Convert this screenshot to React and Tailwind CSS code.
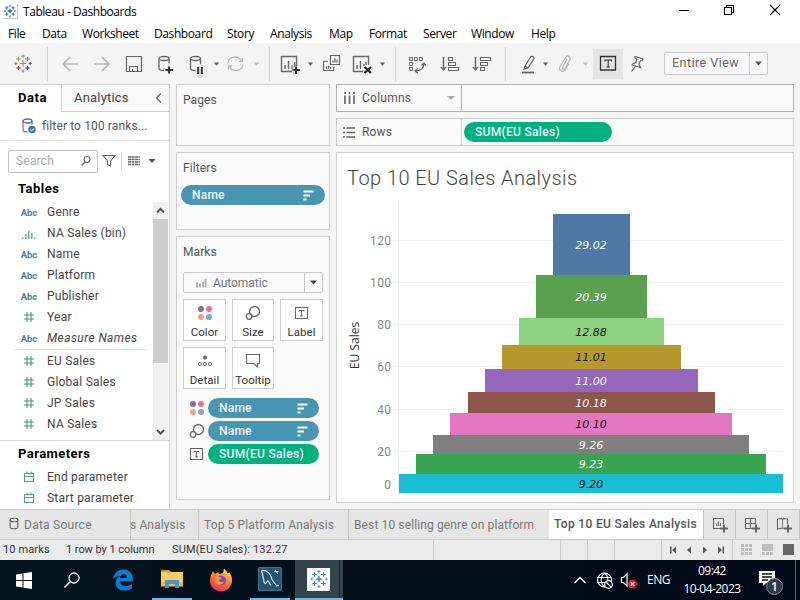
import React from "react";

const UI = "font-['Open_Sans','Noto_Sans',sans-serif]";

function Svg({ w, h = 20, className = "", children, stroke = "#666" }) {
  return (
    <svg width={w} height={h} viewBox={`0 0 ${w} ${h}`} fill="none" stroke={stroke} strokeWidth="1.3" className={`block shrink-0 ${className}`}>
      {children}
    </svg>
  );
}

/* Tableau mark built out of plus signs: [x, y, arm, colour] */
function Crosses({ items, sw = 1.2 }) {
  return items.map(([x, y, r, c], i) => (
    <path key={i} d={`M${x - r} ${y}h${2 * r}M${x} ${y - r}v${2 * r}`} stroke={c} strokeWidth={sw} />
  ));
}
const MARK = [
  [10, 9.5, 3.2, "#e8762d"], [5.5, 5, 2.3, "#c88a3e"], [14.5, 5, 2.3, "#59879b"],
  [5.5, 14, 2.3, "#b5263c"], [14.5, 14, 2.3, "#1f447e"], [10, 2, 1.6, "#7199a6"],
  [10, 17, 1.6, "#7b82a8"], [2.8, 9.5, 1.5, "#8b83a8"], [17.3, 9.5, 1.5, "#5b6591"],
];
const BLUE_MARK = MARK.map(([x, y, r], i) => [x, y, r, i === 0 ? "#2f6d8e" : i > 4 ? "#6ba0bd" : "#4b87a8"]);

const Caret = ({ className, color = "#666" }) => (
  <Svg w={7} className={className} stroke="none"><path d="M.8 8.5h5.4l-2.7 3.2z" fill={color} /></Svg>
);
const WideCaret = ({ color }) => <Svg w={9} h={7} stroke="none"><path d="M1 1.500h7L4.500 5.500z" fill={color} /></Svg>;
const Divider = ({ className }) => <div className={`-mt-[7px] h-[34px] w-px shrink-0 bg-[#d0d0d0] ${className}`} />;

function TitleBar() {
  return (
    <div className={`flex h-[23px] items-start bg-white text-black ${UI}`}>
      <div className="ml-[3px] mt-[4px] h-[15px] w-[15px] border-b border-r border-[#c5c5c5]">
        <svg width="14" height="14" viewBox="0 0 20 19" fill="none"><Crosses items={BLUE_MARK} sw={1.9} /></svg>
      </div>
      <span className="ml-[5px] mt-[4px] text-[12px] leading-4 tracking-[-0.450px]">Tableau - Dashboards</span>
      <div className="ml-auto mr-[19px] flex gap-[34px] pt-[4px]">
        <Svg w={12} h={12} stroke="#000" className="-mr-px ml-px"><path d="M1 6.5h10" strokeWidth="1" /></Svg>
        <Svg w={12} h={12} stroke="#000"><path d="M1.5 3.5h7v7h-7zM3.5 3.5v-2h7v7h-2" strokeWidth="1.1" /></Svg>
        <Svg w={12} h={12} stroke="#000"><path d="M1 1l10 10M11 1L1 11" strokeWidth="1.1" /></Svg>
      </div>
    </div>
  );
}

function MenuBar() {
  const items = [
    ["File", "w-[18px]"], ["Data", "w-6"], ["Worksheet", "w-14"], ["Dashboard", "w-[57px]"], ["Story", "w-[27px]"],
    ["Analysis", "w-[43px]"], ["Map", "w-6"], ["Format", "w-[38px]"], ["Server", "w-8"], ["Window", "w-11"], ["Help", "w-6"],
  ];
  return (
    <div className={`flex h-[20px] gap-4 bg-white pl-2 pt-[2px] text-[12px] leading-[18px] tracking-[-0.400px] text-black ${UI}`}>
      {items.map(([t, w]) => <span key={t} className={`shrink-0 whitespace-nowrap ${w}`}>{t}</span>)}
    </div>
  );
}

function ToolBar() {
  return (
    <div className="flex h-[41px] items-start bg-[#f4f4f4] pt-[11px]">
      <Svg w={20} className="ml-[13px]"><Crosses items={MARK} /></Svg>
      <Divider className="ml-[14px]" />
      <Svg w={18} className="ml-[13px]" stroke="#b5b5b5"><path d="M17 10H2M9 3l-7 7 7 7" strokeWidth="1.7" /></Svg>
      <Svg w={18} className="ml-[14px]" stroke="#b5b5b5"><path d="M1 10h15M9 3l7 7-7 7" strokeWidth="1.7" /></Svg>
      <Svg w={18} className="ml-[14px]"><path d="M1.500 2.500h15v15h-15zM4.500 17v-4.500h8V17M7.500 17v-2" strokeWidth="1.200" /></Svg>
      <Svg w={18} className="ml-[14px]">
        <ellipse cx="7" cy="4.500" rx="5" ry="2" /><path d="M2 4.500v10c0 1 2 2 5 2M12 4.500v5" />
        <path d="M12 12.500v7M8.500 16h7.500" stroke="#333" strokeWidth="2" />
      </Svg>
      <Svg w={16} className="ml-[14px]">
        <ellipse cx="6.500" cy="4.500" rx="5" ry="2" /><path d="M1.500 4.500v10c0 1 2 2 5 2M11.500 4.500v6" />
        <path d="M9.200 13v7M12.800 13v7" stroke="#333" strokeWidth="2" />
      </Svg>
      <Caret className="ml-[8px]" />
      <Svg w={19} className="ml-[6px]" stroke="#b9b9b9"><path d="M2 9c.5-4 3.500-6 7-6 3 0 5 1.500 6.500 4M17 10.500c-.5 4-3.500 6-7 6-3 0-5.500-1.500-6.500-4M16.500 4v3.500H13M2.500 15.500V12H6" /></Svg>
      <Caret className="ml-[8px]" color="#b9b9b9" />
      <Divider className="ml-[9px]" />
      <Svg w={21} className="ml-[10px]">
        <path d="M12 17.500H1.500v-15h15V12M5 15v-4M8.500 15V7M12 15v-3.500M14.500 13V8" strokeWidth="1.400" />
        <path d="M16 12.500v7.500M12.500 16H20" stroke="#333" strokeWidth="2" />
      </Svg>
      <Caret className="ml-[6px]" />
      <Svg w={19} className="ml-[8px]">
        <path d="M8.500 1.500h9v9h-9zM6 7.500H1.500v9h10V13M11 8.500v-2M13 8.500v-4M15 8.500v-3M4.500 15v-2.500M6.500 15v-3.500M8.500 15v-2" strokeWidth="1.200" />
      </Svg>
      <Svg w={21} className="ml-[11px]">
        <path d="M11 17.500H1.500v-15h15V11M5 15v-4M8.500 15V7M12 12v-2M14 11V8" strokeWidth="1.400" />
        <path d="M12.500 13l6.500 6M19 13l-6.500 6" stroke="#222" strokeWidth="2.200" />
      </Svg>
      <Caret className="ml-[6px]" />
      <Divider className="ml-[9px]" />
      <Svg w={18} className="ml-[12px]">
        <path d="M1.500 3.500h3v3h-3zM6.500 3.500h3v3h-3zM11.500 3.500h3v3h-3zM1.500 8.500h3v3h-3zM1.500 13.500h3v3h-3z" strokeWidth="1" />
        <path d="M7 17c5 0 9-2 9-8M9.500 14.500L7 17l3 2.200M13.500 11.500L16 9l2 2.500" />
      </Svg>
      <Svg w={20} className="ml-[14px]">
        <path d="M3.500 3v13M1 13l2.500 3L6 13" strokeWidth="1.400" />
        <path d="M8.500 3.500h4v3h-4zM8.500 8.500h7v3h-7zM8.500 13.500h10v3h-10z" strokeWidth="1.100" />
      </Svg>
      <Svg w={20} className="ml-[12px]">
        <path d="M3.500 3v13M1 13l2.500 3L6 13" strokeWidth="1.400" />
        <path d="M8.500 3.500h10v3h-10zM8.500 8.500h7v3h-7zM8.500 13.500h4v3h-4z" strokeWidth="1.100" />
      </Svg>
      <Divider className="ml-[13px]" />
      <Svg w={16} className="ml-[14px]">
        <path d="M5 12l6-9.500c1.500-.5 3 .5 3 2L8 14l-4 1zM5 12l3 2" /><path d="M2 18.500h12" strokeWidth="1.800" />
      </Svg>
      <Caret className="ml-[6px]" />
      <Svg w={14} className="ml-[9px]" stroke="#bdbdbd">
        <path d="M9 5l-4.500 8c-.8 2 1.700 3 2.500 1.500l5-9c1.200-3-2.700-4.500-4-2.500L2 12.500c-2 4 3 6.500 5.500 3L11 9.500" />
      </Svg>
      <Caret className="ml-[10px]" color="#bdbdbd" />
      <div className="-mt-[5px] ml-[4px] flex h-[30px] w-[30px] items-center justify-center bg-[#e4e4e4]">
        <Svg w={18} stroke="#333"><path d="M1.500 2.500h15v13.500h-15z" strokeWidth="1.300" /><path d="M6 7.500V6h6.500v1.500M9.200 6v7M7.500 13H11" strokeWidth="1.100" /></Svg>
      </div>
      <Svg w={14} className="ml-[7px]"><path d="M5 2.500l8 2.300-1 1.700-1.600.2-1.600 3.600 1.800 3.200L2 11l.8-1.300 2.900-.9L6.800 5.300 5 4zM5.500 12.300L1.500 17.500" strokeWidth="1.200" /></Svg>
      <div className="-mt-[2px] ml-[20px] flex h-[23px] w-[104px] items-center rounded-[2px] border border-[#c9c9c9] bg-[#f8f8f8] font-[Roboto,sans-serif]">
        <span className="w-[84px] whitespace-nowrap pl-[7px] text-[12.500px] tracking-[0.470px] text-[#666]">Entire View</span>
        <div className="flex h-full w-[18px] items-center justify-center border-l border-[#c9c9c9]"><WideCaret color="#555" /></div>
      </div>
    </div>
  );
}

const Abc = () => <span className="text-[9.500px] font-bold leading-[21px] tracking-[-0.1px] text-[#4a8094]">Abc</span>;
const Hash = () => <Svg w={12} h={12} stroke="#3d9978" className="-mt-px"><path d="M4 1v10M8 1v10M1 4h10M1 8h10" strokeWidth="1.100" /></Svg>;
const Bins = () => <Svg w={14} h={12} stroke="#5aa58b"><path d="M.7 11v-1.500M3.800 11V6M6.800 11V3M9.800 11V5M12.800 11V9.500" strokeWidth="1.400" /></Svg>;
const Cal = () => <Svg w={12} h={12} stroke="#4fa385" className="-mt-px"><path d="M1.500 2.500h9v8h-9zM1.500 5.500h9M4 .5v3M8 .5v3" strokeWidth="1.100" /></Svg>;

function Field({ icon, name, italic }) {
  return (
    <div className="flex h-[21px] items-center">
      <div className="flex w-[18px] justify-center">{icon}</div>
      <span className={`ml-[9px] whitespace-nowrap text-[12px] leading-[21px] ${italic ? "italic tracking-[0.420px]" : "tracking-[0.220px]"}`}>{name}</span>
    </div>
  );
}

function DataPane() {
  return (
    <div className="flex w-[170px] shrink-0 flex-col border-r border-t border-[#d0d0d0] bg-white text-[#444]">
      <div className="flex h-[27px]">
        <div className="w-[61px] pl-[18px] text-[13px] font-bold leading-[25px] tracking-[0.600px] text-black">Data</div>
        <div className="flex flex-1 items-center border-b border-l border-[#d0d0d0] bg-[#f9f9f9] pl-[12px]">
          <span className="w-[78px] text-[13px] tracking-[0.200px]">Analytics</span>
          <Svg w={10} h={12} className="ml-[2px]"><path d="M7 1.500L2.500 6 7 10.500" strokeWidth="1.300" /></Svg>
        </div>
      </div>
      <div className="flex h-[29px] items-center border-b border-[#dcdcdc] pl-[22px]">
        <Svg w={15} h={16}>
          <ellipse cx="5.500" cy="3" rx="4.500" ry="2" /><path d="M1 3v9c0 1.200 2 2 4.500 2M10 3v4" strokeWidth="1.100" />
          <circle cx="10" cy="11.500" r="3.800" fill="#3b7e9c" stroke="none" /><path d="M8.200 11.500l1.400 1.400 2.400-2.600" stroke="#fff" strokeWidth="1" />
        </Svg>
        <span className="ml-[5px] whitespace-nowrap text-[12px] tracking-[0.120px] text-[#555]">filter to 100 ranks...</span>
      </div>
      <div className="flex h-[40px] items-center pl-2">
        <div className="flex h-[23px] w-[90px] items-center rounded-[2px] border border-[#bfbfbf] pl-[7px]">
          <span className="w-[65px] text-[12px] tracking-[0.200px] text-[#aaa]">Search</span>
          <Svg w={10} h={12}><circle cx="6" cy="4.500" r="3" strokeWidth="1.100" /><path d="M4 6.700L.7 10.500" /></Svg>
        </div>
        <Svg w={14} h={14} className="ml-[4px]"><path d="M1 1.500h12L8.500 7v5l-3-1.500V7z" strokeWidth="1.100" /></Svg>
        <div className="ml-[5px] h-[18px] w-px bg-[#d0d0d0]" />
        <Svg w={13} h={11} className="ml-[6px]"><path d="M0 1h12M0 3.500h12M0 6h12M0 8.500h12" strokeDasharray="3 0.500" strokeWidth="1.400" /></Svg>
        <Svg w={8} h={6} className="ml-[7px]" stroke="none"><path d="M.5 1h7L4 5z" fill="#555" /></Svg>
      </div>
      <div className="h-[20px] pl-[18px] text-[13px] font-bold leading-[15px] tracking-[0.500px] text-black">Tables</div>
      <div className="flex h-[240px] border-b border-[#dcdcdc]">
        <div className="w-[153px] pl-[14px] pt-px">
          <div className="pl-[6px]">
            <Field icon={<Abc />} name="Genre" /><Field icon={<Bins />} name="NA Sales (bin)" /><Field icon={<Abc />} name="Name" />
            <Field icon={<Abc />} name="Platform" /><Field icon={<Abc />} name="Publisher" /><Field icon={<Hash />} name="Year" />
            <Field icon={<Abc />} name="Measure Names" italic />
          </div>
          <div className="w-[132px] border-t border-[#d8d8d8] pl-[6px] pt-px">
            {["EU Sales", "Global Sales", "JP Sales", "NA Sales"].map((n) => <Field key={n} icon={<Hash />} name={n} />)}
          </div>
        </div>
        <div className="mt-px flex w-[15px] flex-col bg-[#f0f0f0]">
          <Svg w={15} h={17} stroke="#555"><path d="M4 10.500L7.500 7l3.500 3.500" strokeWidth="2" /></Svg>
          <div className="h-[144px] bg-[#cdcdcd]" />
          <Svg w={15} h={17} stroke="#555" className="mt-auto"><path d="M4 7l3.500 3.500L11 7" strokeWidth="2" /></Svg>
        </div>
      </div>
      <div className="h-[26px] pl-[18px] text-[13px] font-bold leading-[25px] tracking-[0.450px] text-black">Parameters</div>
      <div className="pl-5">
        <Field icon={<Cal />} name="End parameter" /><Field icon={<Cal />} name="Start parameter" />
      </div>
    </div>
  );
}

const Dots = () => (
  <Svg w={16} h={16} stroke="none">
    <circle cx="4" cy="4" r="3" fill="#85719a" /><circle cx="12" cy="4" r="3" fill="#ec7183" />
    <circle cx="4" cy="12" r="3" fill="#f0a57f" /><circle cx="12" cy="12" r="3" fill="#86a3c8" />
  </Svg>
);
const SizeIcon = () => <Svg w={16} h={16}><circle cx="9.500" cy="6.500" r="5" /><circle cx="4" cy="11.500" r="2.800" fill="#fafafa" /></Svg>;
const LabelIcon = () => <Svg w={16} h={16}><path d="M1.500 2.500h12v11h-12z" strokeWidth="1.100" /><path d="M5 6.500V5.500h5v1M7.500 5.500v5.500M6 11h3" strokeWidth="1" /></Svg>;
const DetailIcon = () => (
  <Svg w={16} h={16}><circle cx="8" cy="4.500" r="2" fill="#666" stroke="none" /><circle cx="3" cy="11" r="1.600" strokeWidth="1" /><circle cx="8" cy="11" r="1.600" strokeWidth="1" /><circle cx="13" cy="11" r="1.600" strokeWidth="1" /></Svg>
);
const TipIcon = () => <Svg w={16} h={16}><path d="M1.500 1.500h13v9h-2v3.500L9 10.500H1.500z" strokeWidth="1.200" /></Svg>;

function Pill({ children, green, sort, className }) {
  return (
    <div className={`flex h-5 items-center rounded-full pl-[11px] text-[12px] font-medium text-[#eef8f8] ${green ? "bg-[#00b180] tracking-[0.300px]" : "bg-[#4996b2] tracking-[0.200px]"} ${className}`}>
      <span className="flex-1 whitespace-nowrap">{children}</span>
      {sort && <Svg w={11} h={11} className="mr-[11px]" stroke="#fff"><path d="M.5 1.500h10M.5 5.500h6.500M.5 9.500h3" strokeWidth="1.800" /></Svg>}
    </div>
  );
}

function MarkButton({ icon, name, w }) {
  return (
    <div className={`flex h-[42px] flex-col items-center border border-[#cfcfcf] bg-white pt-[5px] text-[11.500px] text-[#333] ${w}`}>
      {icon}
      <span className="mt-[4px] whitespace-nowrap leading-[15px] tracking-[0.050px]">{name}</span>
    </div>
  );
}

function Cards() {
  const card = "border border-[#d0d0d0] bg-[#fafafa] text-[12px] tracking-[0.100px] text-[#555]";
  return (
    <div className="ml-[6px] flex w-[154px] shrink-0 flex-col gap-[6px]">
      <div className={`h-[62px] pl-[6px] pt-[7px] leading-4 ${card}`}>Pages</div>
      <div className={`h-[78px] px-1 pt-[7px] leading-4 ${card}`}>
        <div className="pl-[2px]">Filters</div>
        <Pill sort className="mt-[9px] w-36">Name</Pill>
      </div>
      <div className={`h-[264px] pl-[6px] pt-[7px] leading-4 ${card}`}>
        Marks
        <div className="mt-[12px] flex h-[21px] w-[140px] items-center rounded-[2px] border border-[#c9c9c9]">
          <Svg w={12} h={12} className="ml-[11px]" stroke="#aaa"><path d="M2 10.500V5M5 10.500v-4M8 10.500V5M10.500 10.500v-9" strokeWidth="1.800" /></Svg>
          <span className="ml-[6px] w-[91px] tracking-[-0.050px] text-[#777]">Automatic</span>
          <div className="flex h-full w-[18px] items-center justify-center border-l border-[#c9c9c9]"><WideCaret color="#444" /></div>
        </div>
        <div className="mt-[6px] flex w-[140px] justify-between">
          <MarkButton w="w-[43px]" icon={<Dots />} name="Color" />
          <MarkButton w="w-[42px]" icon={<SizeIcon />} name="Size" />
          <MarkButton w="w-[43px]" icon={<LabelIcon />} name="Label" />
        </div>
        <div className="mt-[6px] flex gap-[6px]">
          <MarkButton w="w-[43px]" icon={<DetailIcon />} name="Detail" />
          <MarkButton w="w-[42px]" icon={<TipIcon />} name="Tooltip" />
        </div>
        <div className="mt-[9px] flex flex-col gap-[3px] pl-[6px]">
          <div className="flex items-center gap-[3px]"><Dots /><Pill sort className="w-[111px]">Name</Pill></div>
          <div className="flex items-center gap-[3px]"><SizeIcon /><Pill sort className="w-[111px]">Name</Pill></div>
          <div className="flex items-center gap-[3px]"><LabelIcon /><Pill green className="w-[111px]">SUM(EU Sales)</Pill></div>
        </div>
      </div>
    </div>
  );
}

/* Bars in chart coordinates: left, top, right, bottom, fill, label, label colour */
const BARS = [
  [216, 14, 293, 75, "#4e79a7", "29.02", "#fff"],
  [199, 75, 310, 118, "#59a14f", "20.39", "#fff"],
  [182, 118, 327, 145, "#8cd17d", "12.88", "#111"],
  [165, 145, 344, 169, "#b6992d", "11.01", "#111"],
  [148, 169, 361, 192, "#9467bd", "11.00", "#fff"],
  [131, 192, 378, 213, "#8c564b", "10.18", "#fff"],
  [113, 213, 395, 235, "#e377c2", "10.10", "#111"],
  [96, 235, 412, 254, "#7f7f7f", "9.26", "#fff"],
  [79, 254, 429, 274, "#38a350", "9.23", "#fff"],
  [62, 274, 446, 293, "#19bed2", "9.20", "#111"],
];
const TICKS = [[120, 40], [100, 82], [80, 124], [60, 166], [40, 209], [20, 251], [0, 293]];

function Chart() {
  return (
    <svg width="456" height="300" viewBox="0 0 456 300" className="block">
      <path d="M61.500 0v293.500" stroke="#ebebeb" />
      {TICKS.map(([t, y]) => (
        <g key={t}>
          <path d={`M56 ${y + 0.5}H447`} stroke="#efefef" />
          <text x="54.500" y={t === 0 ? 289 : y + 5} textAnchor="end" className="fill-[#888] font-[Roboto,sans-serif] text-[12px] tracking-[0.400px]">{t}</text>
        </g>
      ))}
      {BARS.map(([l, t, r, b, c, label, tc]) => (
        <g key={label}>
          <rect x={l} y={t} width={r - l} height={b - t} fill={c} />
          <text x="254" y={(t + b) / 2 + 4.2} textAnchor="middle" fill={tc} className="font-['DejaVu_Sans',sans-serif] text-[11px] italic">{label}</text>
        </g>
      ))}
      <text transform="translate(22 145.500) rotate(-90)" textAnchor="middle" className="fill-[#333] font-['Open_Sans',sans-serif] text-[12px]">EU Sales</text>
    </svg>
  );
}

function Workspace() {
  return (
    <div className="ml-[6px] flex w-[458px] shrink-0 flex-col gap-[6px]">
      <div className="flex h-7 border border-[#b3b3b3] bg-[#fafafa] text-[12px] text-[#555]">
        <div className="flex w-[125px] items-center border-r border-[#b3b3b3] pl-[7px]">
          <Svg w={11} h={13}><path d="M1 0v2M1 3.500V12M5.500 0v2M5.500 3.500V12M10 0v2M10 3.500V12" strokeWidth="1.700" /></Svg>
          <span className="ml-[7px] w-[85px] tracking-[0.250px]">Columns</span>
          <Svg w={8} h={6} stroke="none"><path d="M0 1h8L4 5z" fill="#aaa" /></Svg>
        </div>
      </div>
      <div className="flex h-7 items-center border border-[#d0d0d0] bg-[#fafafa] text-[12px] text-[#555]">
        <div className="flex h-full w-[125px] items-center border-r border-[#d0d0d0] pl-[6px]">
          <Svg w={12} h={11}><path d="M0 1h2M3.500 1H12M0 5.500h2M3.500 5.500H12M0 10h2M3.500 10H12" strokeWidth="1.700" /></Svg>
          <span className="ml-[7px] tracking-[0.150px]">Rows</span>
        </div>
        <Pill green className="ml-[2px] w-[148px]">SUM(EU Sales)</Pill>
      </div>
      <div className="h-[351px] border border-[#d0d0d0] bg-white">
        <div className="h-[47px] pl-[10px] text-[20px] font-light leading-[51px] tracking-[0.440px] text-[#444]">Top 10 EU Sales Analysis</div>
        <Chart />
      </div>
    </div>
  );
}

function SheetTabs() {
  const tab = "flex shrink-0 items-center border-r border-[#c6c6c6] whitespace-nowrap";
  return (
    <div className="flex h-[31px] border-y border-[#cacaca] bg-[#e6e6e6] text-[12px] tracking-[0.120px] text-[#777]">
      <div className={`w-[131px] pl-[9px] ${tab}`}>
        <Svg w={10} h={13} className="-mt-[3px]"><ellipse cx="5" cy="3" rx="3.800" ry="1.800" strokeWidth="1.100" /><path d="M1.200 3v7c0 2.300 7.600 2.300 7.600 0V3" strokeWidth="1.100" /></Svg>
        <span className="ml-[5px] tracking-[0.250px]">Data Source</span>
      </div>
      <div className={`w-[68px] ${tab}`}><span className="-ml-px">s Analysis</span></div>
      <div className={`w-[150px] pl-[5px] ${tab}`}>Top 5 Platform Analysis</div>
      <div className={`w-[200px] border-r-0 pl-[5px] ${tab}`}>Best 10 selling genre on platform</div>
      <div className={`w-[155px] bg-white pb-[2px] pl-[5px] font-medium tracking-[0.330px] text-[#555] ${tab}`}>Top 10 EU Sales Analysis</div>
      <div className={`w-8 pl-[8px] ${tab}`}><Svg w={18} h={18}><path d="M9 12.500H1.500v-10h10V8M4.500 10V7.500M6.500 10V5.500M8.500 10V7" strokeWidth="1.100" /><path d="M12 8.500v8M8 12.500h8" strokeWidth="2" /></Svg></div>
      <div className={`w-8 pl-[8px] ${tab}`}><Svg w={18} h={18}><path d="M8 12.500H1.500v-10h10V8M6.500 2.500v10M1.500 7.500h10" strokeWidth="1.100" /><path d="M12 8.500v8M8 12.500h8" strokeWidth="2" /></Svg></div>
      <div className={`w-8 pl-[8px] ${tab}`}><Svg w={18} h={18}><path d="M8 12.500l-1.500-.5-5 1v-10l4-.5L6.500 4l1-1.500 4 .5V8" strokeWidth="1.100" /><path d="M6.500 4v7.500" strokeWidth="0.800" /><path d="M12 8.500v8M8 12.500h8" strokeWidth="2" /></Svg></div>
    </div>
  );
}

function StatusBar() {
  const cell = "h-full shrink-0 border-r border-[#cacaca]";
  return (
    <div className="flex h-5 items-center bg-[#eaeaea] text-[11px] text-[#333]">
      <div className={`flex w-[434px] items-center whitespace-nowrap pl-[3px] tracking-[0.130px] ${cell}`}>
        <span className="w-[63px]">10 marks</span><span className="w-[106px] tracking-[-0.050px]">1 row by 1 column</span><span>SUM(EU Sales): 132.27</span>
      </div>
      <div className={`w-[127px] ${cell}`} /><div className={`w-[27px] ${cell}`} /><div className={`w-[27px] ${cell}`} /><div className={`w-[47px] ${cell}`} />
      <div className={`flex w-[71px] items-center gap-[8px] pl-[7px] ${cell}`}>
        {["M1 1.500h1.500v7H1zM7 1.500v7L3 5z", "M6 1.500v7L2 5z", "M2 1.500v7L6 5z", "M1 1.500v7L5 5zM5.500 1.500H7v7H5.500z"].map((d) => <Svg key={d} w={8} h={10} stroke="none"><path d={d} fill="#555" /></Svg>)}
      </div>
      <Svg w={60} h={12} stroke="none" className="ml-[8px]">
        {[0, 4, 8].map((y) => [0, 4, 8].map((x) => <rect key={`${x}${y}`} x={x} y={y} width="3" height="3" fill="#bdbdbd" />))}
        <rect x="21" y="0" width="11" height="7" fill="#bdbdbd" />
        {[21, 25, 29].map((x) => <rect key={x} x={x} y="8" width="3" height="3" fill="#bdbdbd" />)}
        <rect x="42" y="0" width="11" height="11" fill="#666" />
      </Svg>
    </div>
  );
}

function TaskBar() {
  return (
    <div className={`flex h-10 items-center bg-linear-to-r from-[#02151c] to-[#020918] text-white ${UI}`}>
      <Svg w={17} h={17} stroke="none" className="ml-[16px]"><path d="M0 2.500l6.500-1V8H0zM7.500 1.300L16 0v8H7.500zM0 9h6.500v6.500L0 14.500zM7.500 9H16v8l-8.500-1.300z" fill="#fff" /></Svg>
      <Svg w={18} h={18} stroke="#fff" className="ml-[30px]"><circle cx="11" cy="7" r="5" /><path d="M7.500 10.500L1.500 16.500" strokeWidth="1.500" /></Svg>
      <Svg w={22} h={22} stroke="none" className="ml-[31px]"><path d="M1 10C2 3.500 6.500.5 11.500.5 17.500.5 21 5 21 10v2.500H8c.2 3 2.500 4.500 5.500 4.500 2.500 0 4.500-.6 6.500-1.800v4.300c-2 1.300-4.500 2-7.500 2C7 21.500 3.500 18.500 3.500 14c0-3 1.500-5.500 4.500-7C5.500 7 2.800 8 1 10zM8 9h7c0-2.500-1.200-4-3.300-4C9.700 5 8.300 6.500 8 9z" fill="#0b7bd7" /></Svg>
      <div className="ml-[18px] flex h-10 w-10 items-center justify-center border-b-2 border-[#75b6e6]">
        <Svg w={22} h={20} stroke="none"><path d="M0 1h8l2 2H0z" fill="#d99b22" /><path d="M0 3h22v14H0z" fill="#f8cf5f" /><path d="M0 13h22v4.500H0z" fill="#f2b93b" /><path d="M4 19v-8h14v8h-4v-4H8v4z" fill="#3d9ad6" /></Svg>
      </div>
      <Svg w={24} h={24} stroke="none" className="ml-[17px]">
        <defs><linearGradient id="fx" x1=".8" y1="0" x2=".3" y2="1"><stop offset="0" stopColor="#ffe03c" /><stop offset=".5" stopColor="#ff7a2a" /><stop offset="1" stopColor="#f02862" /></linearGradient></defs>
        <path d="M2 7l2-4 2 3 3-2 1 2 4-1 1-4.500c2 1.500 3 3 3.500 5l2-1c2 3 3 6 2.500 9C22 19.500 17.500 23.500 12 23.500S1 19 1 13c0-2 .2-4 1-6z" fill="url(#fx)" />
        <circle cx="12" cy="12.500" r="5" fill="#7b45d6" /><path d="M6 9c3-1 5 0 7 1l-3 2c0 2 3 3 5 1.500-1 4-7 5-9 1z" fill="#ff9a25" />
      </Svg>
      <div className="ml-[17px] flex h-10 w-10 items-center justify-center border-b-2 border-[#75b6e6]">
        <Svg w={24} h={24} stroke="#dce9f2"><rect x=".5" y=".5" width="23" height="23" rx="2" fill="#245375" stroke="#43718e" /><path d="M3.500 3.500c5-.5 9 3 10.500 9l4 5.500 3 .5-3 .5M3.500 3.500c1 2 1 5 2 8 .5 2 0 4 1.500 5s1.500-3 3-2.500 1 3 3 4.500M17 3l3 4M16.500 4.500l4 0" strokeWidth="1.200" /></Svg>
      </div>
      <div className="ml-[5px] flex h-10 w-[48px] items-center border-b-2 border-[#75b6e6] bg-[#33444c] pl-[12px]">
        <div className="flex h-[23px] w-[23px] items-center justify-center bg-[#f7f9fa]"><svg width="20" height="20" viewBox="0 0 20 19" fill="none"><Crosses items={BLUE_MARK} sw={1.2} /></svg></div>
        <div className="ml-[9px] h-full w-px bg-[#13252d]" />
      </div>
      <div className="ml-auto flex h-10 items-center">
        <Svg w={14} h={10} stroke="#fff"><path d="M1.500 8L7 2.500 12.500 8" strokeWidth="1.400" /></Svg>
        <Svg w={17} h={17} stroke="#fff" className="ml-[9px]">
          <circle cx="8.500" cy="8" r="7" strokeWidth="1.200" /><path d="M1.500 5.500h14M1.500 10.500h9M8.500 1C4 5 4 11 8.500 15M8.500 1c2.500 2 3.500 5 3.300 7" strokeWidth="1.100" />
          <circle cx="12.500" cy="12.500" r="3.800" fill="#02101a" strokeWidth="1.200" /><path d="M10 10l5 5" strokeWidth="1.100" />
        </Svg>
        <Svg w={18} h={17} stroke="#fff" className="ml-[7px]">
          <path d="M1.500 5.500h2L7 2v12l-3.500-3.500h-2z" strokeWidth="1.200" /><circle cx="12.500" cy="12" r="4.500" fill="#d8232f" stroke="none" /><path d="M10.700 10.200l3.600 3.600M14.300 10.200l-3.600 3.600" strokeWidth="1.200" />
        </Svg>
        <span className="ml-[9px] w-[24px] text-[12px] tracking-[-0.500px]">ENG</span>
        <div className="ml-[10px] flex w-[62px] flex-col items-center whitespace-nowrap text-[12px] leading-[18px] tracking-[-0.550px]"><span>09:42</span><span>10-04-2023</span></div>
        <Svg w={26} h={28} stroke="none" className="ml-[15px] mt-[4px]">
          <path d="M1 3h16v12H8l-3 3v-3H1z" fill="#fff" /><path d="M4 6h10M4 9h10M4 12h6" stroke="#07131c" strokeWidth="1.300" />
          <circle cx="16.500" cy="18.500" r="8" fill="#333b42" stroke="#8b9298" strokeWidth="1" />
          <text x="16.500" y="22.500" textAnchor="middle" fill="#fff" fontSize="12" fontWeight="600">1</text>
        </Svg>
        <div className="ml-[11px] mr-[4px] h-10 w-px bg-[#5d666d]" />
      </div>
    </div>
  );
}

export default function App() {
  return (
    <div className="flex h-[600px] w-[800px] flex-col overflow-hidden bg-[#f4f4f4] font-[Roboto,'Open_Sans',sans-serif]">
      <TitleBar />
      <MenuBar />
      <ToolBar />
      <div className="flex h-[425px]">
        <DataPane />
        <Cards />
        <Workspace />
      </div>
      <SheetTabs />
      <StatusBar />
      <TaskBar />
    </div>
  );
}
